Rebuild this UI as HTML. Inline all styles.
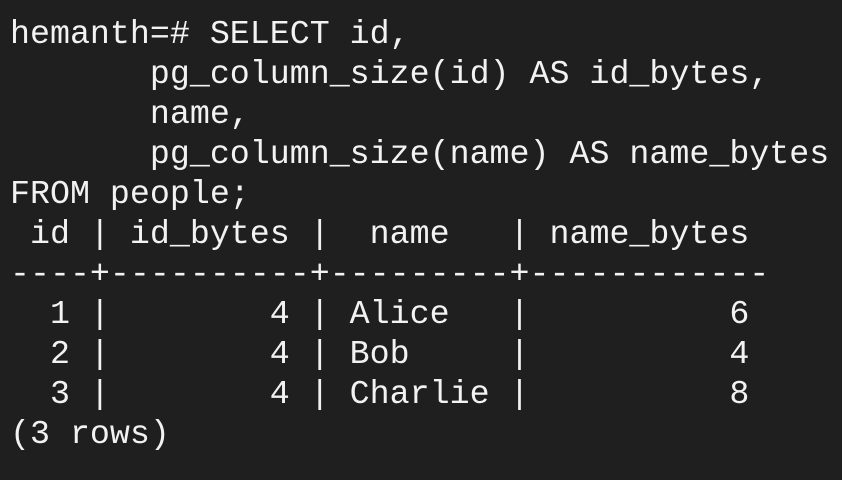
<!DOCTYPE html>
<html><head><style>
html,body{margin:0;padding:0;background:#1f1f1f;width:842px;height:480px;overflow:hidden}
pre{margin:0;padding:14px 0 0 10px;font-family:"Liberation Mono",monospace;font-size:33.3px;line-height:40px;color:#f2f2f2;white-space:pre}
</style></head><body><pre>hemanth=# SELECT id,
       pg_column_size(id) AS id_bytes,
       name,
       pg_column_size(name) AS name_bytes
FROM people;
 id | id_bytes |  name   | name_bytes
----+----------+---------+------------
  1 |        4 | Alice   |          6
  2 |        4 | Bob     |          4
  3 |        4 | Charlie |          8
(3 rows)
</pre></body></html>
